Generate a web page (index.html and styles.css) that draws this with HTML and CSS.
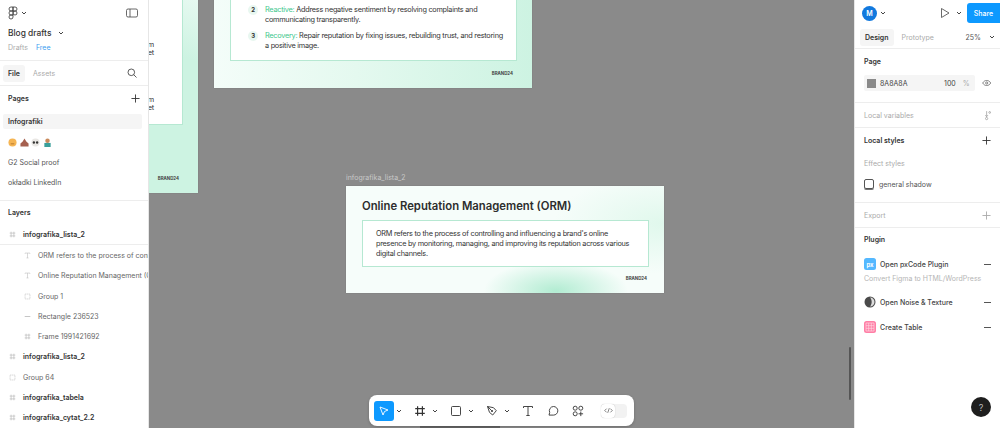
FILE: index.html
```html
<!DOCTYPE html>
<html lang="en">
<head>
    <meta charset="UTF-8">
    <title>Blog drafts - Figma</title>
    <link rel="stylesheet" href="styles.css">
</head>
<body>
    <svg class="sprites" width="0" height="0">
        <symbol id="frame" viewBox="0 0 10 10"><path d="M3 1v8M7 1v8M1 3h8M1 7h8" fill="none" stroke="currentColor" stroke-width="1"/></symbol>
        <symbol id="chev" viewBox="0 0 6 6"><path d="M1 2l2 2 2-2" fill="none" stroke="currentColor" stroke-width="1"/></symbol>
        <symbol id="text" viewBox="0 0 10 10"><path d="M1.500 2.500V1.500h7v1M5 1.500v7M3.500 8.500h3" fill="none" stroke="currentColor" stroke-width=".8"/></symbol>
        <symbol id="group" viewBox="0 0 10 10"><rect x="1.500" y="1.500" width="7" height="7" fill="none" stroke="currentColor" stroke-width=".8" stroke-dasharray="2 .7"/></symbol>
        <symbol id="plus" viewBox="0 0 10 10"><path d="M5 .5v9M.5 5h9" fill="none" stroke="currentColor" stroke-width="1"/></symbol>
    </svg>

    <div class="app">
        <!-- Left panel -->
        <aside class="left-panel">
            <div class="file-head">
                <div class="logo-row">
                    <svg class="figma-logo" viewBox="0 0 10 14"><path d="M5 1H3a2 2 0 0 0 0 4h2zM5 1h2a2 2 0 0 1 0 4H5zM5 5H3a2 2 0 0 0 0 4h2zM5 9H3a2 2 0 1 0 2 2zM7 5a2 2 0 1 1 0 4 2 2 0 0 1 0-4z" fill="none" stroke="#333" stroke-width=".8"/></svg>
                    <svg class="chev"><use href="#chev"/></svg>
                    <svg class="panel-toggle" viewBox="0 0 12 10"><rect x=".5" y="1" width="11" height="8" rx="1.500" fill="none" stroke="#444" stroke-width=".8"/><path d="M4 1v8" stroke="#444" stroke-width=".8"/></svg>
                </div>
                <div class="title-row">Blog drafts <svg class="chev"><use href="#chev"/></svg></div>
                <div class="sub-row"><span>Drafts</span><span class="free">Free</span></div>
            </div>

            <div class="tabs">
                <span class="tab active">File</span>
                <span class="tab">Assets</span>
                <svg class="search" viewBox="0 0 10 10"><circle cx="4.300" cy="4.300" r="3.300" fill="none" stroke="#333" stroke-width=".8"/><path d="M6.700 6.700L9.500 9.500" stroke="#333" stroke-width=".8"/></svg>
            </div>

            <div class="pages">
                <div class="section-head">Pages <svg class="plus"><use href="#plus"/></svg></div>
                <div class="page selected">Infografiki</div>
                <div class="page emoji">
                    <svg viewBox="0 0 10 10"><circle cx="5" cy="5" r="4.500" fill="#f5b553"/><path d="M3 6.500h4" stroke="#b5762a"/></svg>
                    <svg viewBox="0 0 10 10"><path d="M5 .5l2 3.500 2.500 2v3.500H.5V6L3 4z" fill="#a5604f"/></svg>
                    <svg viewBox="0 0 10 10"><circle cx="5" cy="5" r="4.500" fill="#e9e7e4"/><circle cx="3.200" cy="5" r="1.300" fill="#333"/><circle cx="6.800" cy="5" r="1.300" fill="#333"/></svg>
                    <svg viewBox="0 0 10 10"><circle cx="5" cy="3" r="2.500" fill="#c98a5c"/><rect x="1.500" y="5.500" width="7" height="4.500" fill="#3a9f9a"/></svg>
                </div>
                <div class="page">G2 Social proof</div>
                <div class="page">okładki LinkedIn</div>
            </div>

            <div class="layers">
                <div class="section-head">Layers</div>
                <div class="layer top underlined"><svg><use href="#frame"/></svg>infografika_lista_2</div>
                <div class="layer child"><svg><use href="#text"/></svg>ORM refers to the process of controlling</div>
                <div class="layer child"><svg><use href="#text"/></svg>Online Reputation Management (ORM)</div>
                <div class="layer child"><svg><use href="#group"/></svg>Group 1</div>
                <div class="layer child"><svg viewBox="0 0 10 10"><path d="M1 5h8" stroke="currentColor" stroke-width="1.200"/></svg>Rectangle 236523</div>
                <div class="layer child"><svg><use href="#frame"/></svg>Frame 1991421692</div>
                <div class="layer top"><svg><use href="#frame"/></svg>infografika_lista_2</div>
                <div class="layer"><svg><use href="#group"/></svg>Group 64</div>
                <div class="layer top"><svg><use href="#frame"/></svg>infografika_tabela</div>
                <div class="layer top"><svg><use href="#frame"/></svg>infografika_cytat_2.2</div>
            </div>
        </aside>

        <!-- Canvas -->
        <main class="canvas">
            <div class="art art-left">
                <div class="art-box">
                    <p>a brand monitoring platform<br>across the open internet</p>
                    <p>a brand monitoring platform<br>across the open internet</p>
                </div>
                <div class="brand">BRAND24</div>
            </div>

            <div class="art art-top">
                <div class="art-box">
                    <div class="step"><span class="num">2</span><p><em>Reactive:</em> Address negative sentiment by resolving complaints and communicating transparently.</p></div>
                    <div class="step"><span class="num">3</span><p><em>Recovery:</em> Repair reputation by fixing issues, rebuilding trust, and restoring a positive image.</p></div>
                </div>
                <div class="brand">BRAND24</div>
            </div>

            <div class="art-label">infografika_lista_2</div>
            <div class="art art-main">
                <h1>Online Reputation Management (ORM)</h1>
                <div class="art-box">ORM refers to the process of controlling and influencing a brand's online presence by monitoring, managing, and improving its reputation across various digital channels.</div>
                <div class="brand">BRAND24</div>
            </div>

            <div class="scroll-v"></div>
            <div class="scroll-h"></div>

            <!-- Bottom toolbar -->
            <div class="toolbar">
                <span class="tool active"><svg viewBox="0 0 12 12"><path d="M2 2l8 3-3.500 1.500L5 10z" fill="none" stroke="#fff" stroke-width=".9" stroke-linejoin="round"/></svg></span>
                <svg class="chev"><use href="#chev"/></svg>
                <span class="tool"><svg viewBox="0 0 10 10"><use href="#frame"/></svg></span>
                <svg class="chev"><use href="#chev"/></svg>
                <span class="tool"><svg viewBox="0 0 12 12"><rect x="1.500" y="1.500" width="9" height="9" rx="1" fill="none" stroke="#333" stroke-width=".9"/></svg></span>
                <svg class="chev"><use href="#chev"/></svg>
                <span class="tool"><svg viewBox="0 0 12 12"><path d="M1.500 1.500l6 1.200 2.800 3-3.600 4.300-3.200-2.600zM1.500 1.500l4 4" fill="none" stroke="#333" stroke-width=".9" stroke-linejoin="round"/><circle cx="6" cy="6" r="1" fill="#333"/></svg></span>
                <svg class="chev"><use href="#chev"/></svg>
                <span class="tool"><svg viewBox="0 0 12 12"><path d="M1.500 3V1.500h9V3M6 1.500v9M4.300 10.500h3.400" fill="none" stroke="#333" stroke-width=".9"/></svg></span>
                <span class="tool near"><svg viewBox="0 0 12 12"><path d="M6.500 1.500a4.300 4.300 0 0 1 0 8.600H2l.7-2.600a4.300 4.300 0 0 1 3.800-6z" fill="none" stroke="#333" stroke-width=".9" stroke-linejoin="round"/></svg></span>
                <span class="tool near"><svg viewBox="0 0 12 12"><g fill="none" stroke="#333" stroke-width=".9"><circle cx="3.200" cy="3.200" r="2"/><circle cx="8.800" cy="3.200" r="2"/><circle cx="3.200" cy="8.800" r="2"/><path d="M8.800 6.500v4.600M6.500 8.800h4.600"/></g></svg></span>
                <span class="dev-toggle"><span class="knob"><svg viewBox="0 0 12 8"><path d="M3.500 1.500L1 4l2.500 2.500M8.500 1.500L11 4 8.500 6.500M7 1L5 7" fill="none" stroke="#333" stroke-width=".8"/></svg></span></span>
            </div>
        </main>

        <!-- Right panel -->
        <aside class="right-panel">
            <div class="top-row">
                <span class="avatar">M</span>
                <svg class="chev"><use href="#chev"/></svg>
                <svg class="play" viewBox="0 0 10 12"><path d="M1.500 1.500l7.500 4.500-7.500 4.500z" fill="none" stroke="#444" stroke-width=".8" stroke-linejoin="round"/></svg>
                <svg class="chev"><use href="#chev"/></svg>
                <span class="share">Share</span>
            </div>
            <div class="design-tabs">
                <span class="tab active">Design</span>
                <span class="tab">Prototype</span>
                <span class="zoom-val">25%</span>
                <svg class="chev"><use href="#chev"/></svg>
            </div>

            <section class="sec sec-page">
                <div class="sec-title">Page</div>
                <div class="fill-row">
                    <div class="fill-input"><span class="swatch"></span><span class="hex">8A8A8A</span><span class="pct">100</span><span class="pct-sign">%</span></div>
                    <svg class="eye" viewBox="0 0 12 8"><path d="M.8 4C2.500 1.500 4 .8 6 .8s3.500.7 5.200 3.200C9.500 6.500 8 7.200 6 7.200S2.500 6.500.8 4z" fill="none" stroke="#444" stroke-width=".8"/><circle cx="6" cy="4" r="1.400" fill="none" stroke="#444" stroke-width=".8"/></svg>
                </div>
            </section>

            <section class="sec sec-vars">
                <span class="muted-title">Local variables</span>
                <svg class="vars-icon" viewBox="0 0 8 12"><path d="M3 1v6M1.500 5.500L3 7.500M4.500 5.500L3 7.500" fill="none" stroke="#888" stroke-width=".7"/><circle cx="3" cy="9.500" r="1.300" fill="none" stroke="#888" stroke-width=".7"/><circle cx="6.500" cy="2.500" r="1" fill="none" stroke="#888" stroke-width=".7"/></svg>
            </section>

            <section class="sec sec-styles">
                <div class="sec-title spaced">Local styles <svg class="plus"><use href="#plus"/></svg></div>
                <div class="muted-title effect">Effect styles</div>
                <div class="style-row"><span class="shadow-chip"></span>general shadow</div>
            </section>

            <section class="sec sec-export">
                <span class="muted-title">Export</span>
                <svg class="plus light"><use href="#plus"/></svg>
            </section>

            <section class="plugins">
                <div class="sec-title plugin-title">Plugin</div>
                <div class="plugin"><span class="plug-icon px">px</span>Open pxCode Plugin<i class="dash"></i></div>
                <div class="plugin-desc">Convert Figma to HTML/WordPress</div>
                <div class="plugin noise"><svg class="plug-icon" viewBox="0 0 12 12"><circle cx="6" cy="6" r="5.500" fill="#4a4a4a"/><path d="M6 1.500a4.500 4.500 0 0 1 0 9c2-2 2.500-6.500 0-9z" fill="#ddd"/></svg>Open Noise &amp; Texture<i class="dash"></i></div>
                <div class="plugin table"><svg class="plug-icon" viewBox="0 0 12 12"><rect width="12" height="12" rx="2.500" fill="#ff7fa6"/><path d="M2 2h8v8H2zM2 4.700h8M2 7.300h8M4.700 2v8M7.300 2v8" fill="none" stroke="#ffd7e3" stroke-width=".7"/></svg>Create Table<i class="dash"></i></div>
            </section>

            <span class="help">?</span>
        </aside>
    </div>
</body>
</html>
```

FILE: styles.css
```css
/* Global */
* {
    box-sizing: border-box;
}

body {
    margin: 0;
    height: 428px;
    overflow: hidden;
    font-family: 'Inter', sans-serif;
    font-size: 7px;
    color: #444;
    background: #8a8a8a;
}

.sprites {
    position: absolute;
}

.app {
    display: flex;
    width: 1000px;
    height: 428px;
}

.chev {
    width: 6px;
    height: 6px;
    flex: none;
    color: #444;
}

.plus {
    width: 9px;
    height: 9px;
    color: #333;
    flex: none;
}

.plus.light {
    color: #aaa;
}

/* Left panel */
.left-panel {
    width: 149px;
    flex: none;
    background: #fff;
    border-right: 1px solid #e6e6e6;
    overflow: hidden;
}

.file-head {
    height: 61px;
    padding: 0 8px;
    border-bottom: 1px solid #ededed;
}

.logo-row {
    height: 26px;
    display: flex;
    align-items: center;
    gap: 3px;
}

.figma-logo {
    width: 10px;
    height: 14px;
}

.panel-toggle {
    width: 12px;
    height: 10px;
    margin-left: auto;
    margin-right: 2px;
}

.title-row {
    height: 14px;
    display: flex;
    align-items: center;
    gap: 7px;
    font-size: 8.4px;
    font-weight: 500;
    color: #333;
}

.sub-row {
    height: 14px;
    display: flex;
    align-items: center;
    gap: 8px;
    color: #aaa;
}

.free {
    color: #3d9eef;
}

.tabs {
    height: 25px;
    display: flex;
    align-items: center;
    padding: 0 11px 0 3px;
    border-bottom: 1px solid #ededed;
}

.tab {
    padding: 4px 5px;
    margin-right: 3px;
    border-radius: 3px;
    color: #aaa;
}

.tab.active {
    background: #f5f5f5;
    color: #333;
    font-weight: 600;
}

.search {
    width: 10px;
    height: 10px;
    margin-left: auto;
}

.pages {
    height: 115px;
    border-bottom: 1px solid #ededed;
}

.section-head {
    height: 25px;
    padding: 0 8px;
    display: flex;
    align-items: center;
    justify-content: space-between;
    font-weight: 600;
    color: #333;
}

.page {
    height: 20.3px;
    display: flex;
    align-items: center;
    padding: 0 5px;
    margin: 0 6px 0 3px;
    color: #555;
}

.page.selected {
    height: 15px;
    margin-top: 3px;
    margin-bottom: 3px;
    background: #f5f5f5;
    border-radius: 2px;
    color: #333;
    font-weight: 600;
}

.page.emoji {
    gap: 2.7px;
}

.page.emoji svg {
    width: 9px;
    height: 9px;
}

.layers .section-head {
    height: 23px;
}

.layers .section-head + .layer {
    margin-top: 1px;
}

.layer {
    height: 20.3px;
    display: flex;
    align-items: center;
    gap: 7px;
    padding-left: 9px;
    white-space: nowrap;
    color: #666;
}

.layer svg {
    width: 7px;
    height: 7px;
    flex: none;
    color: #bbb;
}

.layer.top {
    color: #333;
    font-weight: 600;
}

.layer.child {
    padding-left: 24px;
}

.layer.underlined {
    border-bottom: 1px solid #ededed;
}

/* Canvas */
.canvas {
    flex: 1;
    position: relative;
    overflow: hidden;
    background: #8a8a8a;
}

.art {
    position: absolute;
    width: 318px;
    font-size: 7.3px;
    letter-spacing: -0.25px;
    color: #333;
    box-shadow: 0 0 1px rgba(0, 0, 0, 0.2);
}

.art-box {
    position: absolute;
    left: 16px;
    right: 15px;
    background: #fff;
    border: 1px solid #b6e8d2;
}

.art-left {
    left: -269px;
    top: -20px;
    height: 213px;
    background: linear-gradient(200deg, #eefbf5 0%, #cdf3e2 25%, #cdf3e2 100%);
}

.art-left .art-box {
    top: 0;
    height: 145px;
    padding-right: 28px;
    text-align: right;
    line-height: 8px;
}

.art-left p {
    margin: 0;
    padding-top: 60px;
    white-space: nowrap;
}

.art-left p + p {
    padding-top: 39px;
}

.art-top {
    left: 65px;
    top: -20px;
    height: 108px;
    background: linear-gradient(90deg, #f4fdf9 0%, #e4f9ef 45%, #cdf3e2 100%);
}

.art-top .art-box {
    top: 0;
    height: 81px;
    padding: 24px 12px 0 17px;
}

.step {
    display: flex;
    gap: 7px;
    margin-bottom: 5.5px;
    line-height: 10px;
}

.step p {
    margin: 0;
}

.step em {
    font-style: normal;
    color: #41c78d;
}

.num {
    width: 10px;
    height: 10px;
    flex: none;
    border-radius: 50%;
    background: #e8f7f0;
    text-align: center;
    font-size: 6px;
    font-weight: 700;
}

.art-label {
    position: absolute;
    left: 197px;
    top: 173px;
    color: #c8c8c8;
}

.art-main {
    left: 197px;
    top: 186px;
    height: 107px;
    background:
        radial-gradient(ellipse 72px 30px at 66% 98%, #b2ecd2 0%, rgba(178, 236, 210, 0) 100%),
        radial-gradient(ellipse 110px 50px at 100% 35%, #e0f8ec 0%, rgba(224, 248, 236, 0) 100%),
        #f6fdfa;
}

.art-main h1 {
    margin: 13px 0 0 16px;
    font-size: 11.3px;
    line-height: 15px;
    font-weight: 600;
    letter-spacing: 0;
    color: #2d2d2d;
}

.art-main .art-box {
    top: 34px;
    height: 47px;
    padding: 8px 14px 8px 13px;
    line-height: 10px;
}

.brand {
    position: absolute;
    right: 19px;
    bottom: 12px;
    font-size: 4.400px;
    font-weight: 700;
    letter-spacing: 0;
    color: #444;
}

.art-main .brand {
    right: 17px;
}

.scroll-v {
    position: absolute;
    right: 3px;
    top: 347px;
    width: 2px;
    height: 53px;
    background: #555;
    border-radius: 1px;
}

.scroll-h {
    position: absolute;
    left: 271px;
    bottom: 0;
    width: 80px;
    height: 2px;
    background: #666;
}

/* Toolbar */
.toolbar {
    position: absolute;
    left: 220px;
    top: 395px;
    width: 265px;
    height: 31px;
    display: flex;
    align-items: center;
    padding: 0 7px 0 5px;
    background: #fff;
    border-radius: 8px;
    box-shadow: 0 1px 3px rgba(0, 0, 0, 0.2);
}

.tool {
    width: 20px;
    height: 20px;
    display: flex;
    align-items: center;
    justify-content: center;
    flex: none;
    margin-left: 8px;
}

.tool.near {
    margin-left: 5px;
}

.tool svg {
    width: 12px;
    height: 12px;
    color: #333;
}

.tool.active {
    margin-left: 0;
    background: #0d99ff;
    border-radius: 3px;
}

.toolbar .chev {
    margin-left: 2px;
}

.dev-toggle {
    width: 26px;
    height: 14px;
    margin-left: auto;
    background: #f2f2f2;
    border-radius: 4px;
}

.knob {
    width: 14px;
    height: 14px;
    display: flex;
    align-items: center;
    justify-content: center;
    background: #fff;
    border-radius: 4px;
    box-shadow: 0 0 1px rgba(0, 0, 0, 0.3);
}

.knob svg {
    width: 9px;
    height: 7px;
}

/* Right panel */
.right-panel {
    width: 146px;
    flex: none;
    position: relative;
    background: #fff;
    border-left: 1px solid #e6e6e6;
    overflow: hidden;
}

.top-row {
    height: 26px;
    display: flex;
    align-items: center;
    padding-left: 7px;
}

.avatar {
    width: 15px;
    height: 15px;
    border-radius: 50%;
    background: #1279de;
    color: #fff;
    display: flex;
    align-items: center;
    justify-content: center;
    font-size: 7px;
    font-weight: 600;
}

.top-row .chev {
    margin-left: 3px;
}

.play {
    width: 10px;
    height: 12px;
    margin-left: 54px;
}

.top-row .play + .chev {
    margin-left: 6px;
}

.share {
    width: 33px;
    height: 20px;
    margin-left: auto;
    display: flex;
    align-items: center;
    justify-content: center;
    background: #0d99ff;
    border-radius: 3px 0 0 3px;
    color: #fff;
    font-weight: 500;
}

.design-tabs {
    height: 23px;
    display: flex;
    align-items: center;
    padding: 0 5px;
    border-bottom: 1px solid #ededed;
}

.zoom-val {
    margin-left: auto;
    margin-right: 8px;
    color: #555;
}

.design-tabs .tab {
    margin-right: 3px;
}

.sec {
    padding: 0 9px;
    border-bottom: 1px solid #ededed;
}

.sec-title {
    font-weight: 600;
    color: #333;
}

.sec-page {
    height: 54px;
    padding-top: 8px;
}

.fill-row {
    display: flex;
    align-items: center;
    margin-top: 9px;
    gap: 7px;
}

.fill-input {
    width: 117px;
    height: 16px;
    display: flex;
    align-items: center;
    padding: 0 5px 0 3px;
    background: #f5f5f5;
    border-radius: 2px;
}

.swatch {
    width: 9px;
    height: 9px;
    background: #8a8a8a;
    margin-right: 4px;
}

.hex {
    color: #444;
}

.pct {
    margin-left: auto;
    margin-right: 7px;
}

.pct-sign {
    color: #aaa;
}

.eye {
    width: 10px;
    height: 8px;
}

.sec-vars,
.sec-export {
    height: 25px;
    display: flex;
    align-items: center;
    justify-content: space-between;
}

.vars-icon {
    width: 7px;
    height: 11px;
}

.muted-title {
    color: #aaa;
}

.sec-styles {
    height: 75px;
    padding-top: 8px;
}

.spaced {
    display: flex;
    align-items: center;
    justify-content: space-between;
}

.effect {
    margin-top: 14px;
}

.style-row {
    display: flex;
    align-items: center;
    gap: 5px;
    margin-top: 11px;
    color: #555;
}

.shadow-chip {
    width: 10px;
    height: 10px;
    border: 1px solid #555;
    border-radius: 2px;
    box-shadow: 0 1px 0 #777;
}

.plugins {
    padding: 7px 9px;
}

.plugin-title {
    margin-bottom: 13px;
}

.plugin {
    height: 14px;
    display: flex;
    align-items: center;
    gap: 4px;
    font-weight: 500;
    color: #444;
}

.plug-icon {
    width: 12px;
    height: 12px;
    flex: none;
}

.px {
    display: flex;
    align-items: center;
    justify-content: center;
    background: #54b8ff;
    border-radius: 2.500px;
    color: #fff;
    font-size: 6px;
    font-weight: 700;
}

.dash {
    width: 7px;
    height: 1px;
    margin-left: auto;
    background: #555;
}

.plugin-desc {
    margin: 3px 0 0;
    line-height: 9px;
    color: #b5b5b5;
    white-space: nowrap;
}

.noise {
    margin-top: 12px;
}

.table {
    margin-top: 11px;
}

.help {
    position: absolute;
    right: 9px;
    bottom: 11px;
    width: 20px;
    height: 20px;
    border-radius: 50%;
    background: #1e1e1e;
    color: #bbb;
    display: flex;
    align-items: center;
    justify-content: center;
    font-size: 9px;
}
```
